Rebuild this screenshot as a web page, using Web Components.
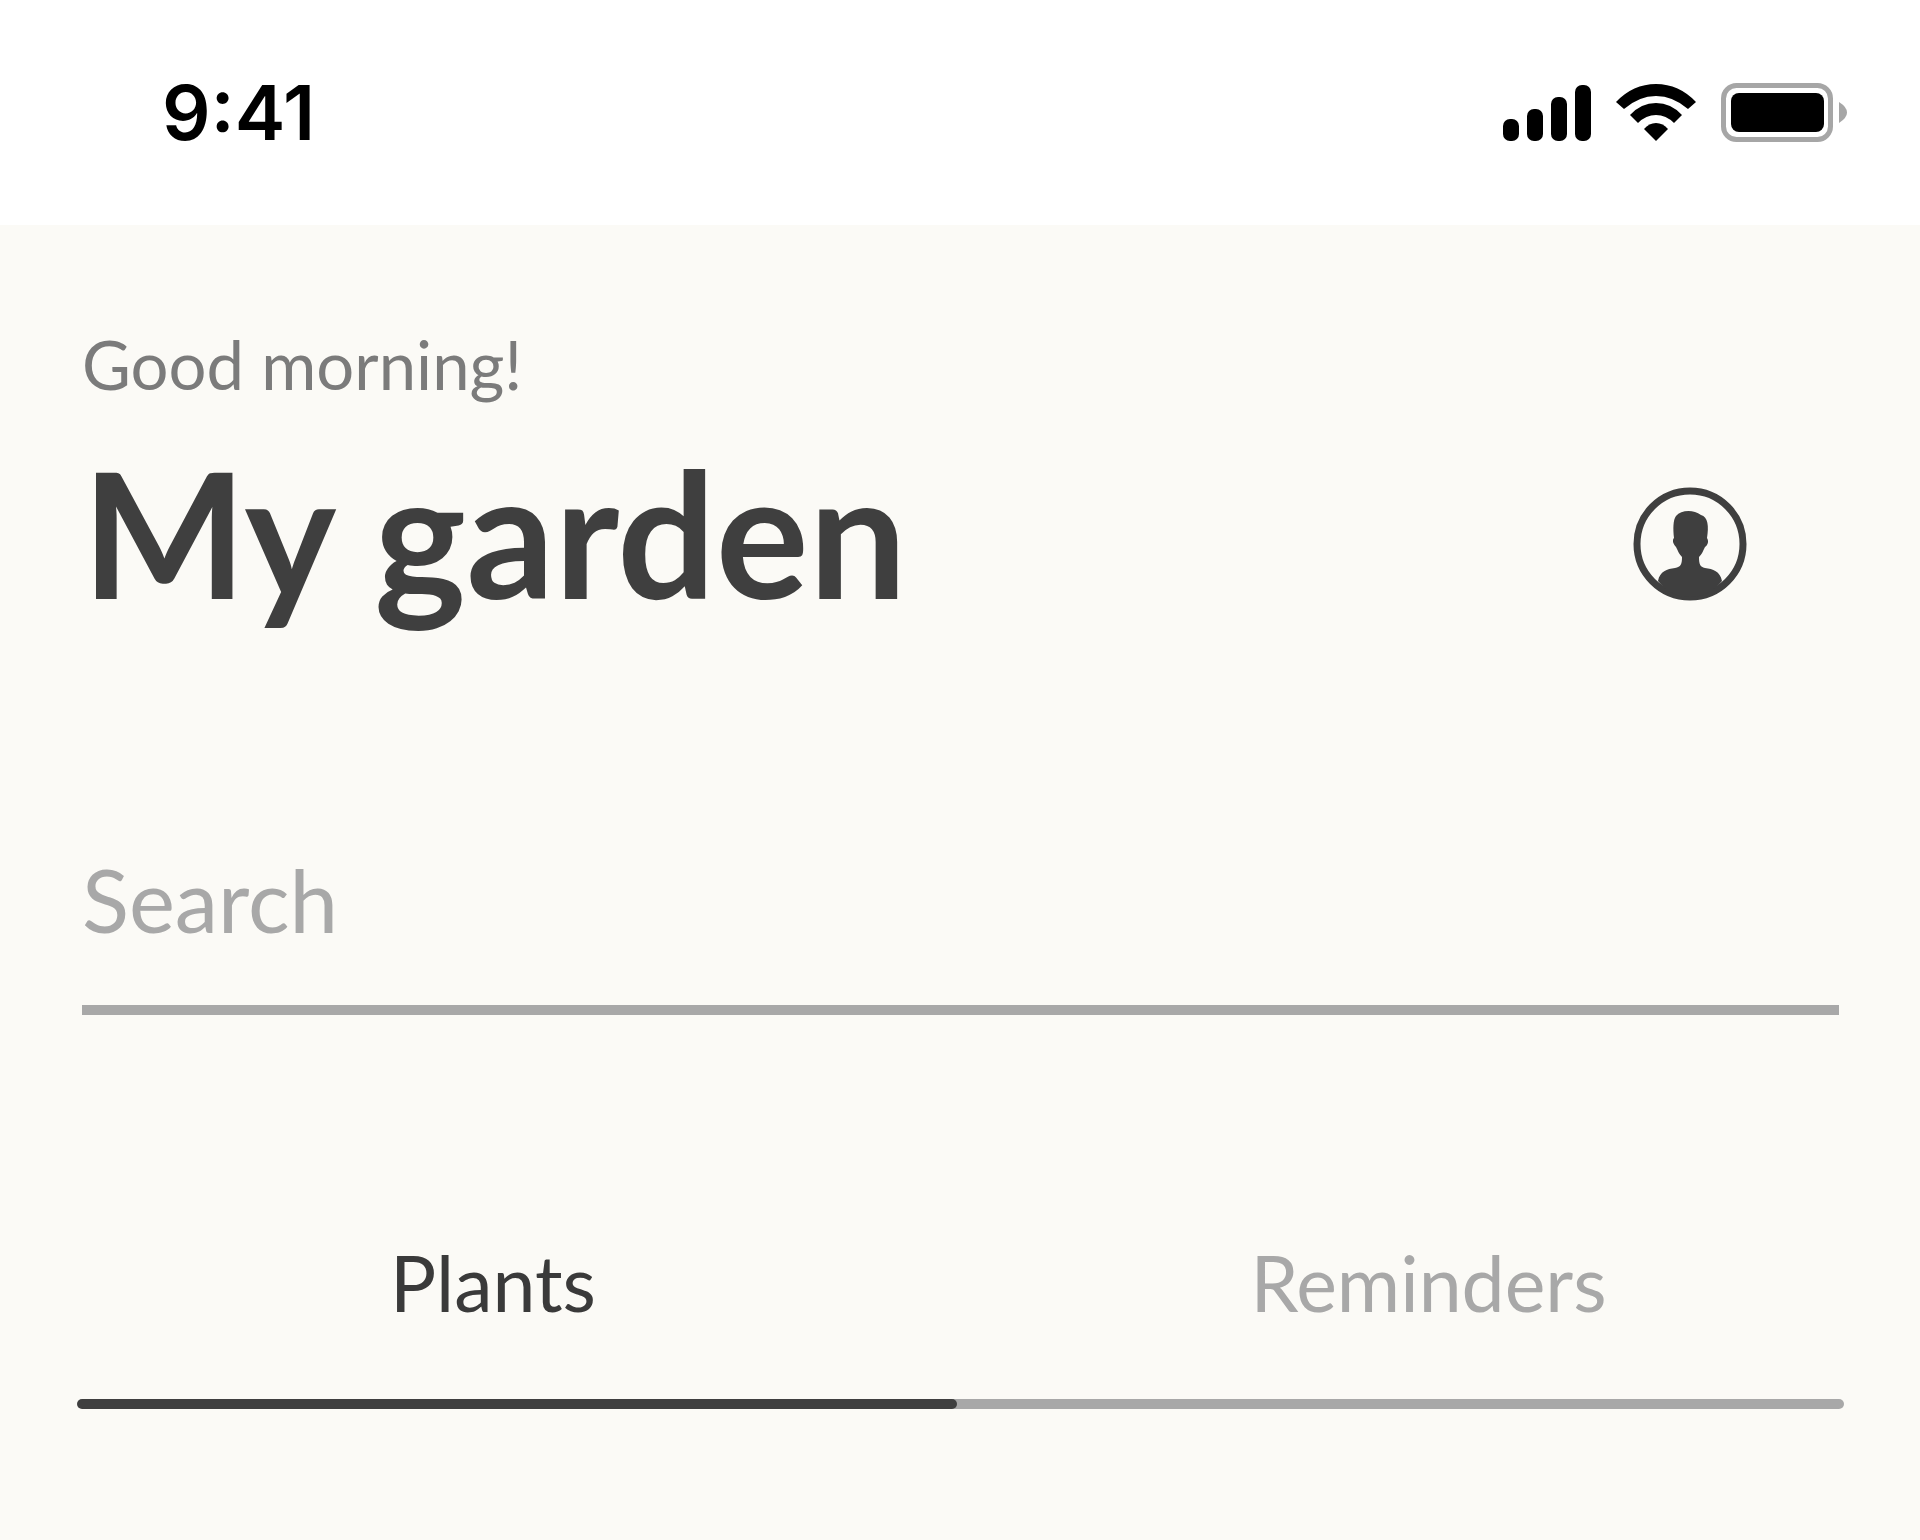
<!DOCTYPE html>
<html lang="en">
<head>
<meta charset="utf-8">
<meta name="viewport" content="width=device-width, initial-scale=1">
<title>My garden</title>
<style>
  body { margin: 0; background: #fbfaf6; font-family: Lato, "Open Sans", sans-serif; }
</style>
</head>
<body>
<garden-app></garden-app>
<script>
class BaseElement extends HTMLElement {
  constructor() {
    super();
    this.attachShadow({ mode: "open" }).innerHTML = this.constructor.markup;
  }
}

class StatusBar extends BaseElement {
  static markup = `
    <style>
      :host { display: flex; align-items: center; justify-content: space-between;
        box-sizing: border-box; height: 225px; padding: 0 73px 0 162px;
        background: #fff; color: #000; }
      time { padding-bottom: 2px; font: 600 76px/90px Inter, sans-serif; }
      .icons { display: flex; align-items: center; gap: 24px; }
      svg { display: block; }
    </style>
    <time datetime="09:41"><slot></slot></time>
    <div class="icons">
      <svg width="88" height="60" viewBox="0 0 88 60" role="img" aria-label="Signal">
        <rect x="0" y="36" width="16" height="22" rx="7"/>
        <rect x="24" y="26" width="16" height="32" rx="7"/>
        <rect x="48" y="14" width="16" height="44" rx="7"/>
        <rect x="72" y="2" width="16" height="56" rx="7"/>
      </svg>
      <svg width="82" height="60" viewBox="0 0 82 60" role="img" aria-label="Wi-Fi">
        <path d="M1 19Q18 1 41 1T81 19L73 26Q58 13 41 13T9 26Z"/>
        <path d="M15 32Q26 20 41 20T67 32L59 40Q51 32 41 32T23 40Z"/>
        <path d="M29 46Q34 40 41 40T53 46L41 58Z"/>
      </svg>
      <svg width="126" height="60" viewBox="0 0 126 60" role="img" aria-label="Battery">
        <rect x="2.500" y="2.500" width="107" height="54" rx="13" fill="none" stroke="#a6a6a6" stroke-width="5"/>
        <rect x="10" y="10" width="93" height="39" rx="8"/>
        <path d="M118 19Q126 24 126 29.500T118 40Z" fill="#a6a6a6"/>
      </svg>
    </div>`;
}

class ProfileButton extends BaseElement {
  static markup = `
    <style>
      :host { display: block; }
      button { display: block; padding: 0; border: 0; background: none; color: #3f3f3f; cursor: pointer; }
      svg { display: block; }
    </style>
    <button type="button" aria-label="Profile">
      <svg width="114" height="114" viewBox="0 0 114 114">
        <circle cx="57" cy="57" r="53" fill="none" stroke="currentColor" stroke-width="7"/>
        <path fill="currentColor" d="M25 94C27 84 34 82 42 81C48 80 49 77 49 70C46 67 45 64 43 60C40 57 39 53 41 51C40 42 40 33 43 29C48 23 60 22 68 28C75 30 76 39 74 51C76 54 75 58 72 60C70 64 69 67 66 70C66 77 67 80 72 81C80 82 87 84 89 94Q76 110 57 110T25 94Z"/>
      </svg>
    </button>`;
}

class PageHeading extends BaseElement {
  static markup = `
    <style>
      :host { display: block; }
      p { margin: 0 0 23px; font-size: 67px; line-height: 79px; color: #7b7b7b; }
      .row { display: flex; align-items: flex-end; justify-content: space-between; padding-right: 92px; }
      h1 { margin: 0; font-size: 174px; line-height: 210px; font-weight: 700; color: #3f3f3f; }
      .action { padding-bottom: 36px; }
    </style>
    <p><slot name="greeting"></slot></p>
    <div class="row">
      <h1><slot></slot></h1>
      <div class="action"><slot name="action"></slot></div>
    </div>`;
}

class SearchField extends BaseElement {
  static markup = `
    <style>
      :host { display: block; }
      input { display: block; box-sizing: border-box; width: 100%; height: 168px; margin: 0;
        padding: 0 0 54px; border: 0; border-bottom: 10px solid #a8a8a8; border-radius: 0;
        background: none; outline: 0; color: #3f3f3f; font: inherit;
        font-size: 87px; line-height: 104px; }
      input::placeholder { color: #a8a8a8; opacity: 1; }
    </style>
    <input type="text" aria-label="Search" placeholder="Search">`;
}

class TabBar extends BaseElement {
  static markup = `
    <style>
      :host { display: block; }
      div { display: flex; }
    </style>
    <div role="tablist"><slot></slot></div>`;
}

class TabItem extends BaseElement {
  static markup = `
    <style>
      :host { display: block; flex: 1; }
      :host([selected]) { flex: 0 0 49.8%; }
      button { display: block; width: 100%; margin: 0; padding: 0; border: 0; background: none;
        font: inherit; font-size: 77px; line-height: 92px; color: #a8a8a8; cursor: pointer; }
      .label { display: block; padding: 0 0 71px 56px; }
      .track, .line { display: block; }
      .line { height: 10px; background: #a8a8a8; border-radius: 0 5px 5px 0; }
      :host([selected]) button { color: #3a3a3a; }
      :host([selected]) .label { padding: 0 48px 71px 0; }
      :host([selected]) .track { background: linear-gradient(90deg, transparent 50%, #a8a8a8 50%); }
      :host([selected]) .line { background: #3f3f3f; border-radius: 5px; }
    </style>
    <button type="button" role="tab">
      <span class="label"><slot></slot></span>
      <span class="track"><span class="line"></span></span>
    </button>`;
  connectedCallback() {
    this.shadowRoot.querySelector("button").setAttribute("aria-selected", String(this.hasAttribute("selected")));
  }
}

class GardenApp extends BaseElement {
  static markup = `
    <style>
      :host { display: block; }
      main { display: flex; flex-direction: column; padding: 100px 81px 130px 82px; }
      search-field { margin-top: 210px; }
      tab-bar { margin: 221px -5px 0; }
    </style>
    <status-bar>9:41</status-bar>
    <main>
      <page-heading>
        <span slot="greeting">Good morning!</span>
        My garden
        <profile-button slot="action"></profile-button>
      </page-heading>
      <search-field></search-field>
      <tab-bar>
        <tab-item selected>Plants</tab-item>
        <tab-item>Reminders</tab-item>
      </tab-bar>
    </main>`;
}

customElements.define("status-bar", StatusBar);
customElements.define("profile-button", ProfileButton);
customElements.define("page-heading", PageHeading);
customElements.define("search-field", SearchField);
customElements.define("tab-item", TabItem);
customElements.define("tab-bar", TabBar);
customElements.define("garden-app", GardenApp);
</script>
</body>
</html>
